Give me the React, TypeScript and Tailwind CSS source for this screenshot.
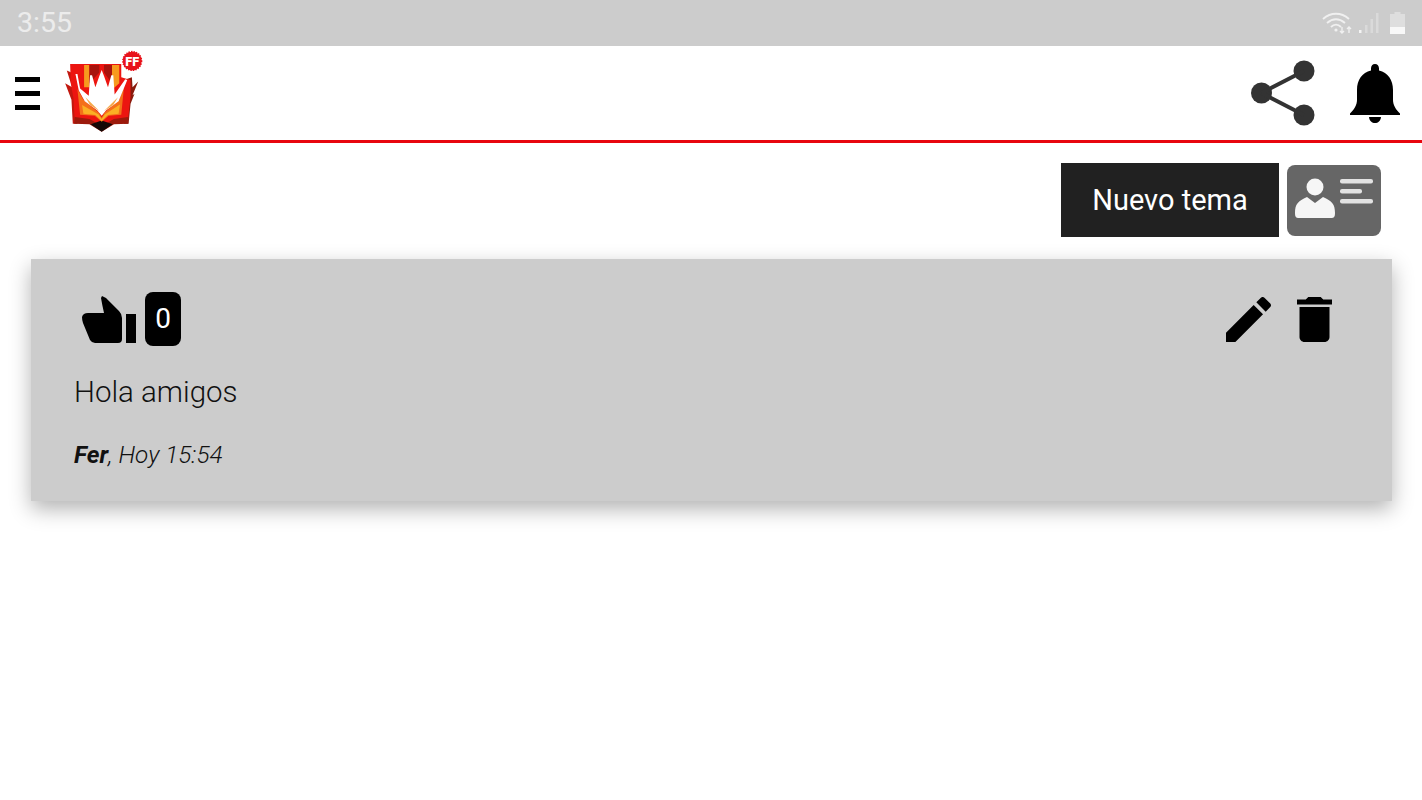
function Logo() {
  // drawn on the crop grid: 3 units = 1px
  return (
    <svg viewBox="192 150 240 250" className="ml-[24px] mt-[4px] h-[83px] w-[80px] shrink-0">
      {/* side wings, left and right */}
      <path d="M195 250 L216 262 L200 212 L232 226 L232 372 L218 372 L214 300 Z" fill="#c2180f" />
      <path d="M415 245 L398 262 L396 232 L372 240 L372 372 L386 372 L392 312 L404 282 L398 286 Z" fill="#8a1a0c" />
      {/* red shield */}
      <path d="M210 192 L364 192 L364 232 L392 240 L392 290 L384 366 L342 372 L305 392 L268 372 L224 366 L220 296 L212 250 Z" fill="#ec1510" />
      {/* lower dark band and tip */}
      <path d="M224 352 L268 358 L305 378 L342 358 L384 352 L385 372 L342 374 L305 396 L268 374 L222 372 Z" fill="#9c1a0c" />
      <path d="M272 374 L305 362 L338 374 L305 396 Z" fill="#150806" />
      {/* orange stripes on top */}
      <path d="M252 195 L268 195 L268 262 L252 262 Z M336 195 L358 195 L358 250 L336 270 Z" fill="#f79a1e" />
      <path d="M268 195 L298 195 L298 218 L268 250 Z M312 195 L336 195 L336 250 L312 218 Z" fill="#a8130d" />
      {/* orange V under the crown */}
      <path d="M232 268 L250 300 L296 338 L305 354 L314 338 L358 300 L372 262 L364 345 L326 348 L305 366 L284 348 L240 345 Z" fill="#f4701a" />
      <path d="M246 316 L296 344 L305 358 L314 344 L360 314 L356 342 L324 346 L305 364 L286 346 L250 342 Z" fill="#fbb024" />
      {/* white crown */}
      <path d="M226 222 L232 222 L240 266 L266 288 L270 226 L276 226 L286 262 L298 228 L305 210 L312 228 L324 262 L334 226 L340 226 L344 284 L376 238 L382 240 L356 304 L318 332 L305 348 L292 332 L254 304 L236 272 Z" fill="#ffffff" />
      <path d="M256 292 L298 334 L270 316 Z M354 292 L312 334 L340 316 Z" fill="#f6a94a" />
      {/* badge */}
      <circle cx="397" cy="183" r="28" fill="#e8131b" stroke="#e8131b" strokeWidth="5" strokeDasharray="4 3.5" />
      <circle cx="397" cy="183" r="28" fill="#e8131b" />
      <text x="397" y="197" textAnchor="middle" fill="#fff" fontSize="38" fontWeight="900" fontFamily="Roboto, sans-serif">FF</text>
    </svg>
  );
}

export default function App() {
  return (
    <div className="min-h-[800px] bg-white font-['Roboto',sans-serif] text-black">
      {/* status bar */}
      <div className="flex h-[46px] items-center justify-between bg-[#cccccc] pl-[17px] pr-[17px]">
        <span className="text-[28.5px] leading-none text-[#ececec]">3:55</span>
        <div className="flex items-center">
          <svg viewBox="0 0 32 22" className="h-[22px] w-[32px]" fill="none" stroke="#f0f0f0" strokeWidth="1.9">
            <path d="M1 7 C9 0 19 0 27 7" />
            <path d="M5 11 C11 6 17 6 23 11" />
            <path d="M9 15 C12 12 16 12 19 15" />
            <circle cx="14" cy="18" r="1.6" fill="#f0f0f0" stroke="none" />
            <path d="M20 15 V21 M18 19 L20 21 L22 19 M27 21 V15 M25 17 L27 15 L29 17" strokeWidth="1.4" />
          </svg>
          <svg viewBox="0 0 20 22" className="ml-[5px] h-[22px] w-[20px]" fill="#dadada">
            <rect x="0" y="18" width="2.5" height="3" fill="#f4f4f4" />
            <rect x="6" y="13" width="2.5" height="8" />
            <rect x="11.5" y="7" width="2.5" height="14" />
            <rect x="17" y="1" width="2.5" height="20" />
          </svg>
          <svg viewBox="0 0 15 22" className="ml-[11px] h-[22px] w-[15px]">
            <path d="M4.5 0 H10.5 V2 H15 V22 H0 V2 H4.5 Z" fill="#dedede" />
            <rect x="0" y="15" width="15" height="7" fill="#f8f8f8" />
          </svg>
        </div>
      </div>

      {/* app bar */}
      <header className="flex h-[97px] border-b-[3px] border-[#e8060f] bg-white">
        <div className="ml-[15px] flex h-[94px] w-[25px] flex-col justify-center gap-[9px]">
          <span className="h-[5px] bg-black" />
          <span className="h-[5px] bg-black" />
          <span className="h-[5px] bg-black" />
        </div>
        <Logo />
        <div className="ml-auto mr-[22px] flex items-center gap-[35px]">
          <svg viewBox="0 0 64 66" className="h-[66px] w-[64px]" fill="#333333">
            <circle cx="10.5" cy="33" r="10.5" />
            <circle cx="53" cy="11" r="10.5" />
            <circle cx="53" cy="55" r="10.5" />
            <path d="M10.5 33 L53 11 M10.5 33 L53 55" stroke="#333333" strokeWidth="4" />
          </svg>
          <svg viewBox="0 0 50 59" className="mt-[1px] h-[59px] w-[50px]" fill="#000000">
            <path d="M25 0 C22.5 0 21 2 21 4.5 L21 6.5 C12 8.5 7 16 7 26 L7 36 C7 41 4 46 0 49.5 L0 51 L50 51 L50 49.5 C46 46 43 41 43 36 L43 26 C43 16 38 8.5 29 6.5 L29 4.5 C29 2 27.5 0 25 0 Z" />
            <path d="M19 53 H31 C30.5 57 28 59 25 59 C22 59 19.5 57 19 53 Z" />
          </svg>
        </div>
      </header>

      {/* actions */}
      <div className="flex items-center justify-end gap-[8px] pr-[41px] pt-[20px]">
        <button className="flex h-[74px] w-[218px] items-center justify-center bg-[#212121] pt-[2px] text-[29px] text-white">
          Nuevo tema
        </button>
        <div className="h-[71px] w-[94px] rounded-[8px] bg-[#666666]">
          <svg viewBox="0 0 94 71" className="h-[71px] w-[94px]" fill="#f6f6f6">
            <circle cx="28" cy="22" r="8.5" />
            <path d="M8 48 C8 39 11 36 20 32 L28 38 L36 32 C45 36 48 39 48 48 C48 52 47 53 44 53 H12 C9 53 8 52 8 48 Z" />
            <g fill="#e2e2e2">
              <rect x="53" y="14" width="33" height="4.5" rx="2" />
              <rect x="53" y="24" width="22" height="4.5" rx="2" />
              <rect x="53" y="34" width="33" height="4.5" rx="2" />
            </g>
          </svg>
        </div>
      </div>

      {/* post */}
      <article className="ml-[31px] mr-[30px] mt-[22px] h-[242px] bg-[#cccccc] pl-[43px] pr-[60px] pt-[33px] shadow-[0_8px_20px_rgba(0,0,0,0.3)]">
        <div className="flex h-[54px] items-center justify-between">
          <div className="flex items-center gap-[9px] pl-[8px]">
            <svg viewBox="0 0 54 47" className="h-[47px] w-[54px]" fill="#000000">
              <path d="M20 0 L24 2 L37 15 Q40 18 40 22 V43 Q40 47 36 47 H13 Q10 47 8 44 L1 27 Q0 24 0 21 Q1 17 6 17 H22 Q20 8 19 2 Z" />
              <rect x="44" y="18" width="10" height="29" />
            </svg>
            <span className="flex h-[54px] w-[36px] items-center justify-center rounded-[8px] bg-black text-[28px] text-white">0</span>
          </div>
          <div className="flex items-center gap-[26px]">
            <svg viewBox="3 3 18 18" className="h-[45px] w-[45px]" fill="#000000">
              <path d="M3 17.25V21h3.75L17.81 9.94l-3.75-3.75L3 17.25zM20.71 7.04c.39-.39.39-1.02 0-1.41l-2.34-2.34c-.39-.39-1.02-.39-1.41 0l-1.83 1.83 3.75 3.75 1.83-1.83z" />
            </svg>
            <svg viewBox="5 3 14 18" className="h-[45px] w-[35px]" fill="#000000">
              <path d="M6 19c0 1.1.9 2 2 2h8c1.1 0 2-.9 2-2V7H6v12zM19 4h-3.5l-1-1h-5l-1 1H5v2h14V4z" />
            </svg>
          </div>
        </div>
        <p className="mt-[30px] text-[29.5px] font-light leading-[32px] text-[#111111]">Hola amigos</p>
        <p className="mt-[33px] text-[24.3px] font-light italic leading-[28px] text-[#111111]">
          <b className="font-bold">Fer</b>, Hoy 15:54
        </p>
      </article>
    </div>
  );
}
